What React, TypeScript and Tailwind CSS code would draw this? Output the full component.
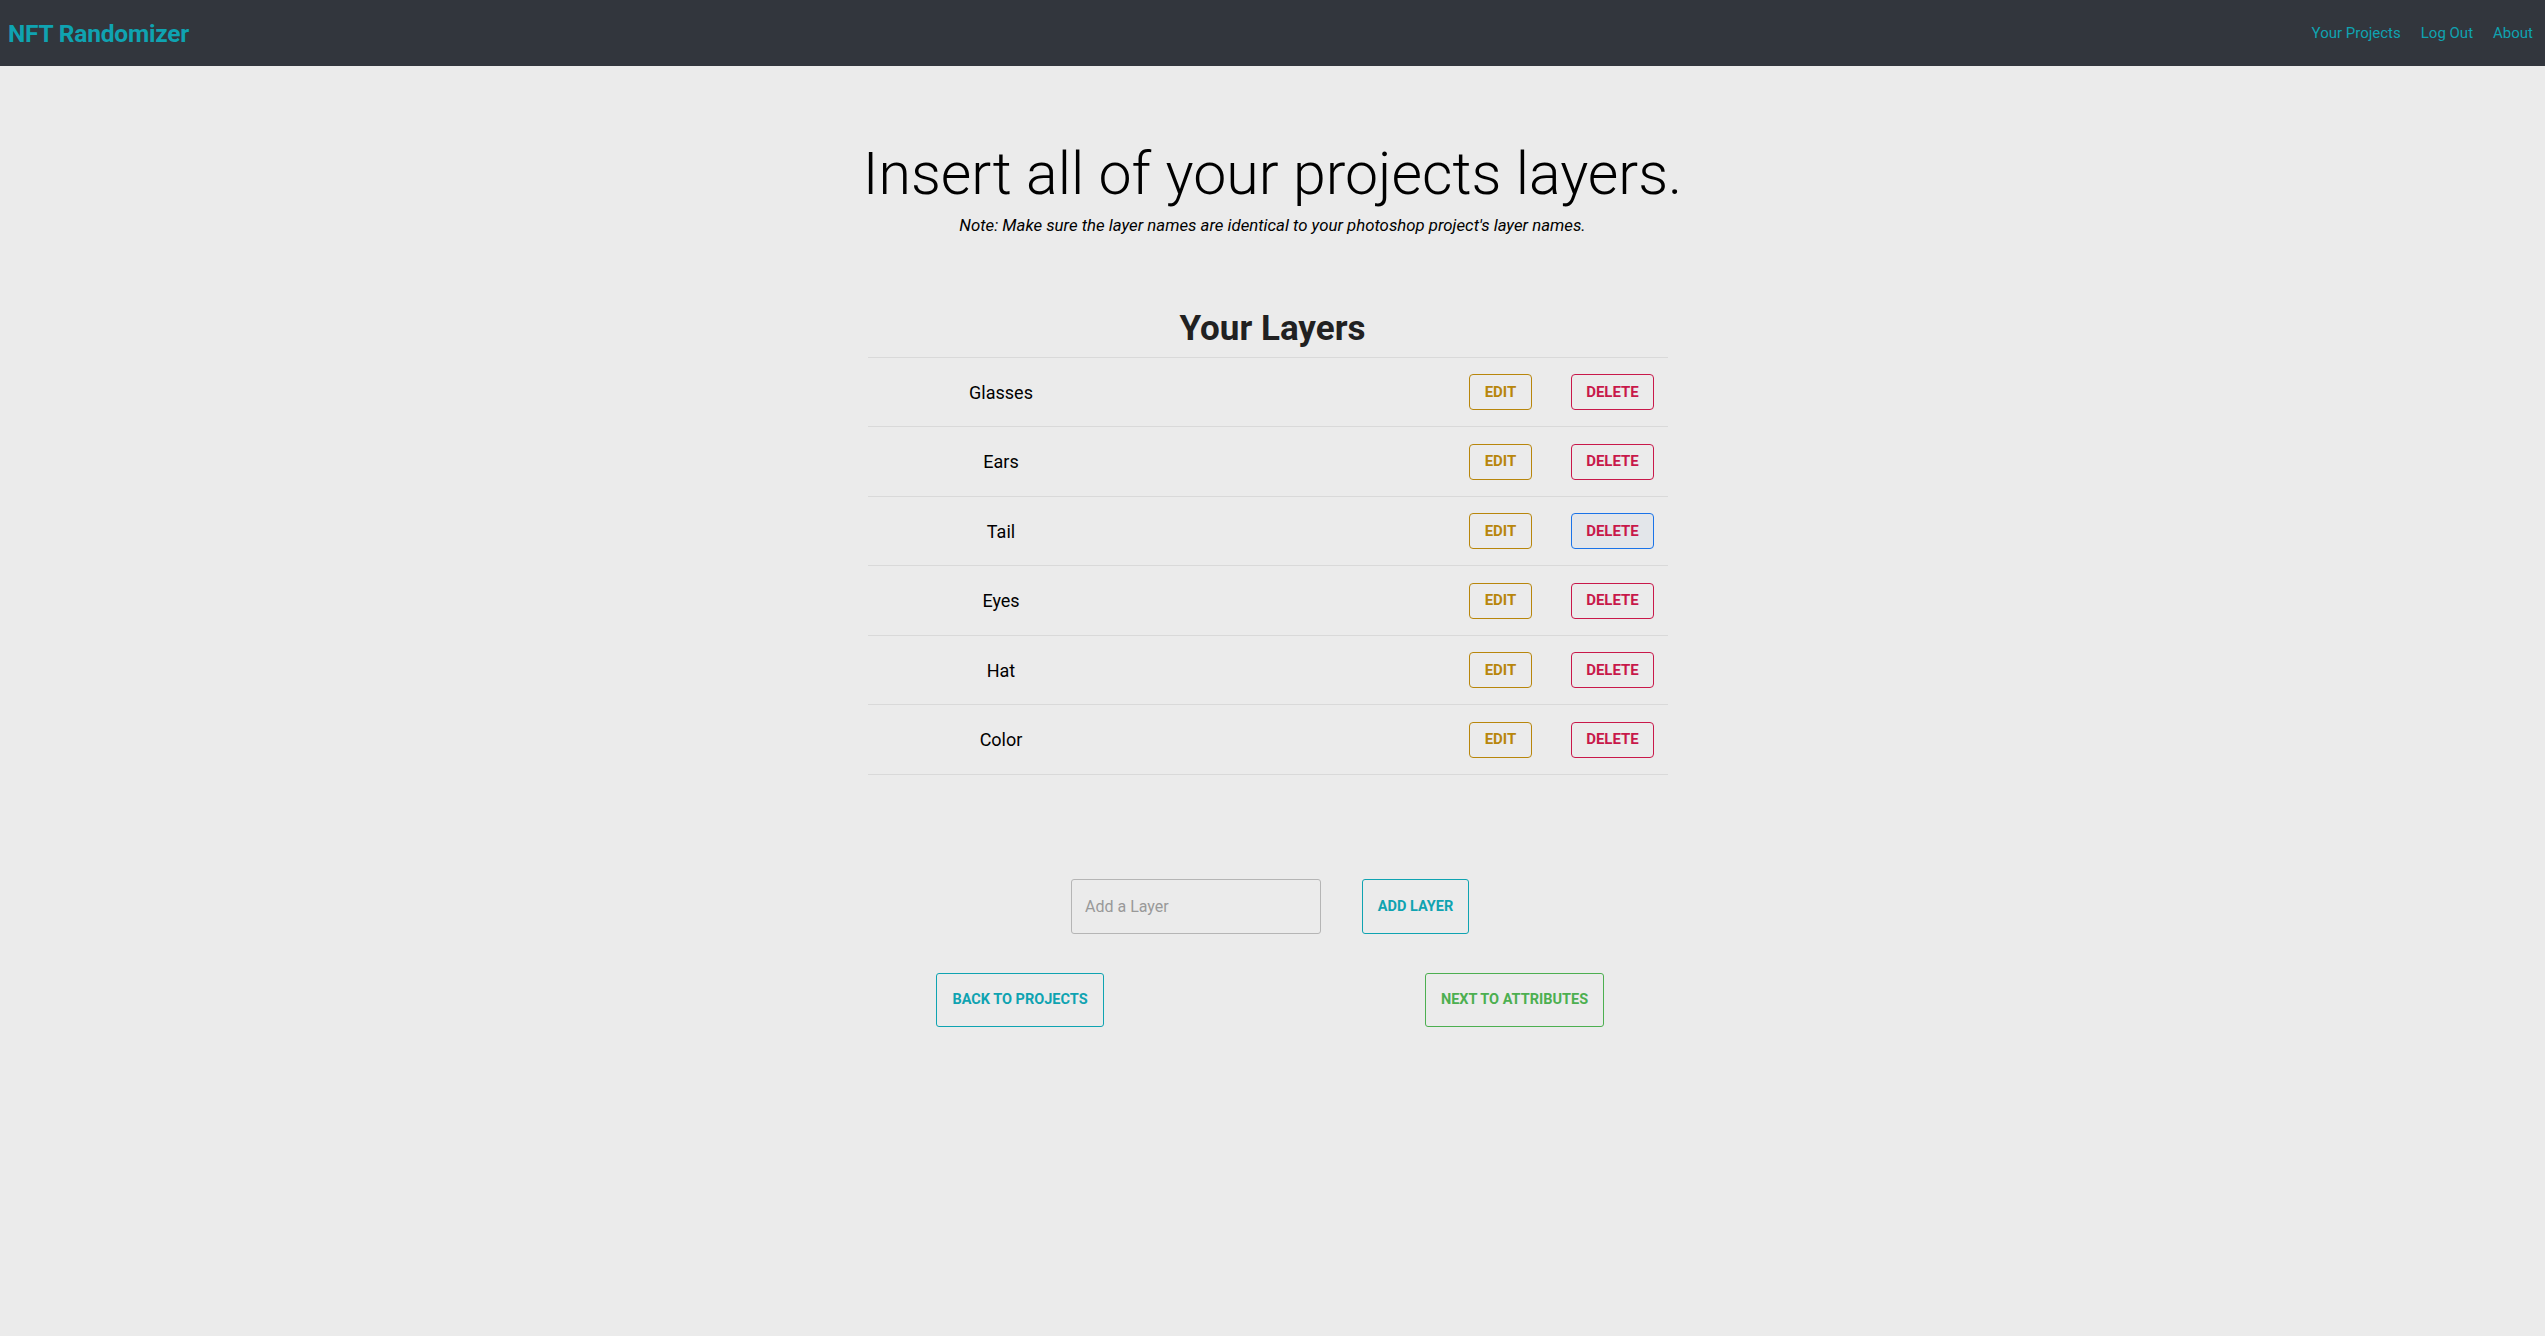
import React from "react";

const layers = ["Glasses", "Ears", "Tail", "Eyes", "Hat", "Color"];

export default function App() {
  return (
    <div
      className="min-h-[1336px] w-full bg-[#ebebeb] text-[#111]"
      style={{ fontFamily: "Roboto, 'Liberation Sans', sans-serif" }}
    >
      <nav className="flex h-[66px] items-center justify-between bg-[#32363d] pl-[8px] pr-[12px]">
        <span className="mt-[2px] text-[24.5px] font-bold tracking-[-0.2px] text-[#0fa3b1]">NFT Randomizer</span>
        <div className="flex items-center gap-[20px] text-[15px] text-[#0fa3b1]">
          <span>Your Projects</span>
          <span>Log Out</span>
          <span>About</span>
        </div>
      </nav>

      <div className="flex flex-col items-center">
        <h1 className="mt-[73px] text-[59px] font-light leading-[1.2] text-black">
          Insert all of your projects layers.
        </h1>
        <p className="mt-[3px] text-[16.8px] italic text-black">
          Note: Make sure the layer names are identical to your photoshop project's layer names.
        </p>

        <h2 className="mt-[70px] text-[35px] font-bold leading-[1.2] text-[#212121]">Your Layers</h2>

        <div className="mr-[9px] mt-[7px] w-[800px] border-t border-[#d9d9d9]">
          {layers.map((name) => (
            <div
              key={name}
              className="grid h-[69.5px] grid-cols-[266px_1fr_63px_39px_83px_14px] items-center border-b border-[#d9d9d9]"
            >
              <span className="text-center text-[18px] text-black">{name}</span>
              <span />
              <button className="h-[36px] w-[63px] rounded-[4px] border border-[#b8860b] text-[15px] font-bold text-[#b8860b]">
                EDIT
              </button>
              <span />
              <button
                className={
                  name === "Tail"
                    ? "h-[36px] w-[83px] rounded-[4px] border border-[#1a73e8] bg-[#e3e6ea] text-[15px] font-bold text-[#c8184a]"
                    : "h-[36px] w-[83px] rounded-[4px] border border-[#c8184a] text-[15px] font-bold text-[#c8184a]"
                }
              >
                DELETE
              </button>
              <span />
            </div>
          ))}
        </div>

        <div className="mr-[5px] mt-[104px] flex items-center gap-[41px]">
          <input
            placeholder="Add a Layer"
            className="h-[55px] w-[250px] rounded-[3px] border border-[#b5b5b5] bg-transparent px-[13px] text-[16px] text-[#333] placeholder:text-[#999] outline-none"
          />
          <button className="h-[55px] w-[107px] rounded-[3px] border border-[#0fa3b1] text-[14.5px] font-bold text-[#0fa3b1]">
            ADD LAYER
          </button>
        </div>

        <div className="mr-[5px] mt-[39px] flex w-[668px] items-center justify-between">
          <button className="h-[54px] w-[168px] rounded-[3px] border border-[#0fa3b1] text-[14.5px] font-bold text-[#0fa3b1]">
            BACK TO PROJECTS
          </button>
          <button className="h-[54px] w-[179px] rounded-[3px] border border-[#4caf50] text-[14.5px] font-bold text-[#4caf50]">
            NEXT TO ATTRIBUTES
          </button>
        </div>
      </div>
    </div>
  );
}
